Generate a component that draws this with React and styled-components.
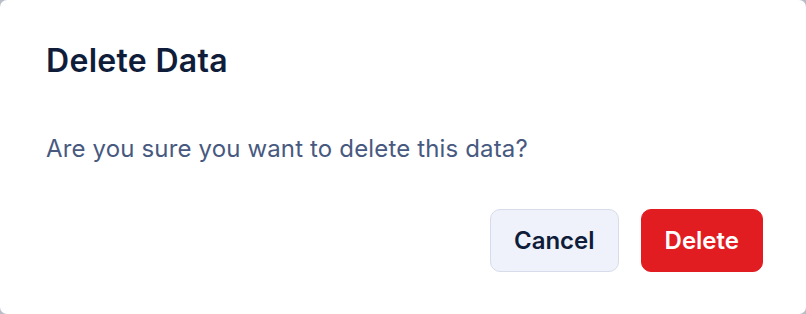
import React from "react";
import styled, { createGlobalStyle } from "styled-components";

const GlobalStyle = createGlobalStyle`
  html, body {
    margin: 0;
    padding: 0;
    background: #b9bdc8;
  }
  body {
    font-family: Inter, "Noto Sans", "Liberation Sans", sans-serif;
  }
`;

const Dialog = styled.div`
  box-sizing: border-box;
  width: 806px;
  height: 314px;
  background: #ffffff;
  border-radius: 7px;
  padding: 41px 43px 42px 46px;
  display: flex;
  flex-direction: column;
`;

const Title = styled.h2`
  margin: 0;
  font-size: 32px;
  line-height: 39px;
  font-weight: 600;
  color: #0f1d3a;
  letter-spacing: 0.3px;
`;

const Message = styled.p`
  margin: 51px 0 0;
  font-size: 24px;
  line-height: 36px;
  font-weight: 400;
  color: #48597f;
  letter-spacing: 0.15px;
`;

const Actions = styled.div`
  margin-top: auto;
  display: flex;
  justify-content: flex-end;
  gap: 22px;
`;

const Button = styled.button`
  box-sizing: border-box;
  height: 63px;
  padding: 0 23px;
  border-radius: 10px;
  border: 1px solid ${(p) => (p.$danger ? "#e11d22" : "#d6dcea")};
  background: ${(p) => (p.$danger ? "#e11d22" : "#eff2fa")};
  color: ${(p) => (p.$danger ? "#ffffff" : "#0f1d3a")};
  font-family: inherit;
  font-size: 24px;
  font-weight: 600;
  cursor: pointer;
`;

const App = () => (
  <>
    <GlobalStyle />
    <Dialog>
      <Title>Delete Data</Title>
      <Message>Are you sure you want to delete this data?</Message>
      <Actions>
        <Button>Cancel</Button>
        <Button $danger>Delete</Button>
      </Actions>
    </Dialog>
  </>
);

export default App;
